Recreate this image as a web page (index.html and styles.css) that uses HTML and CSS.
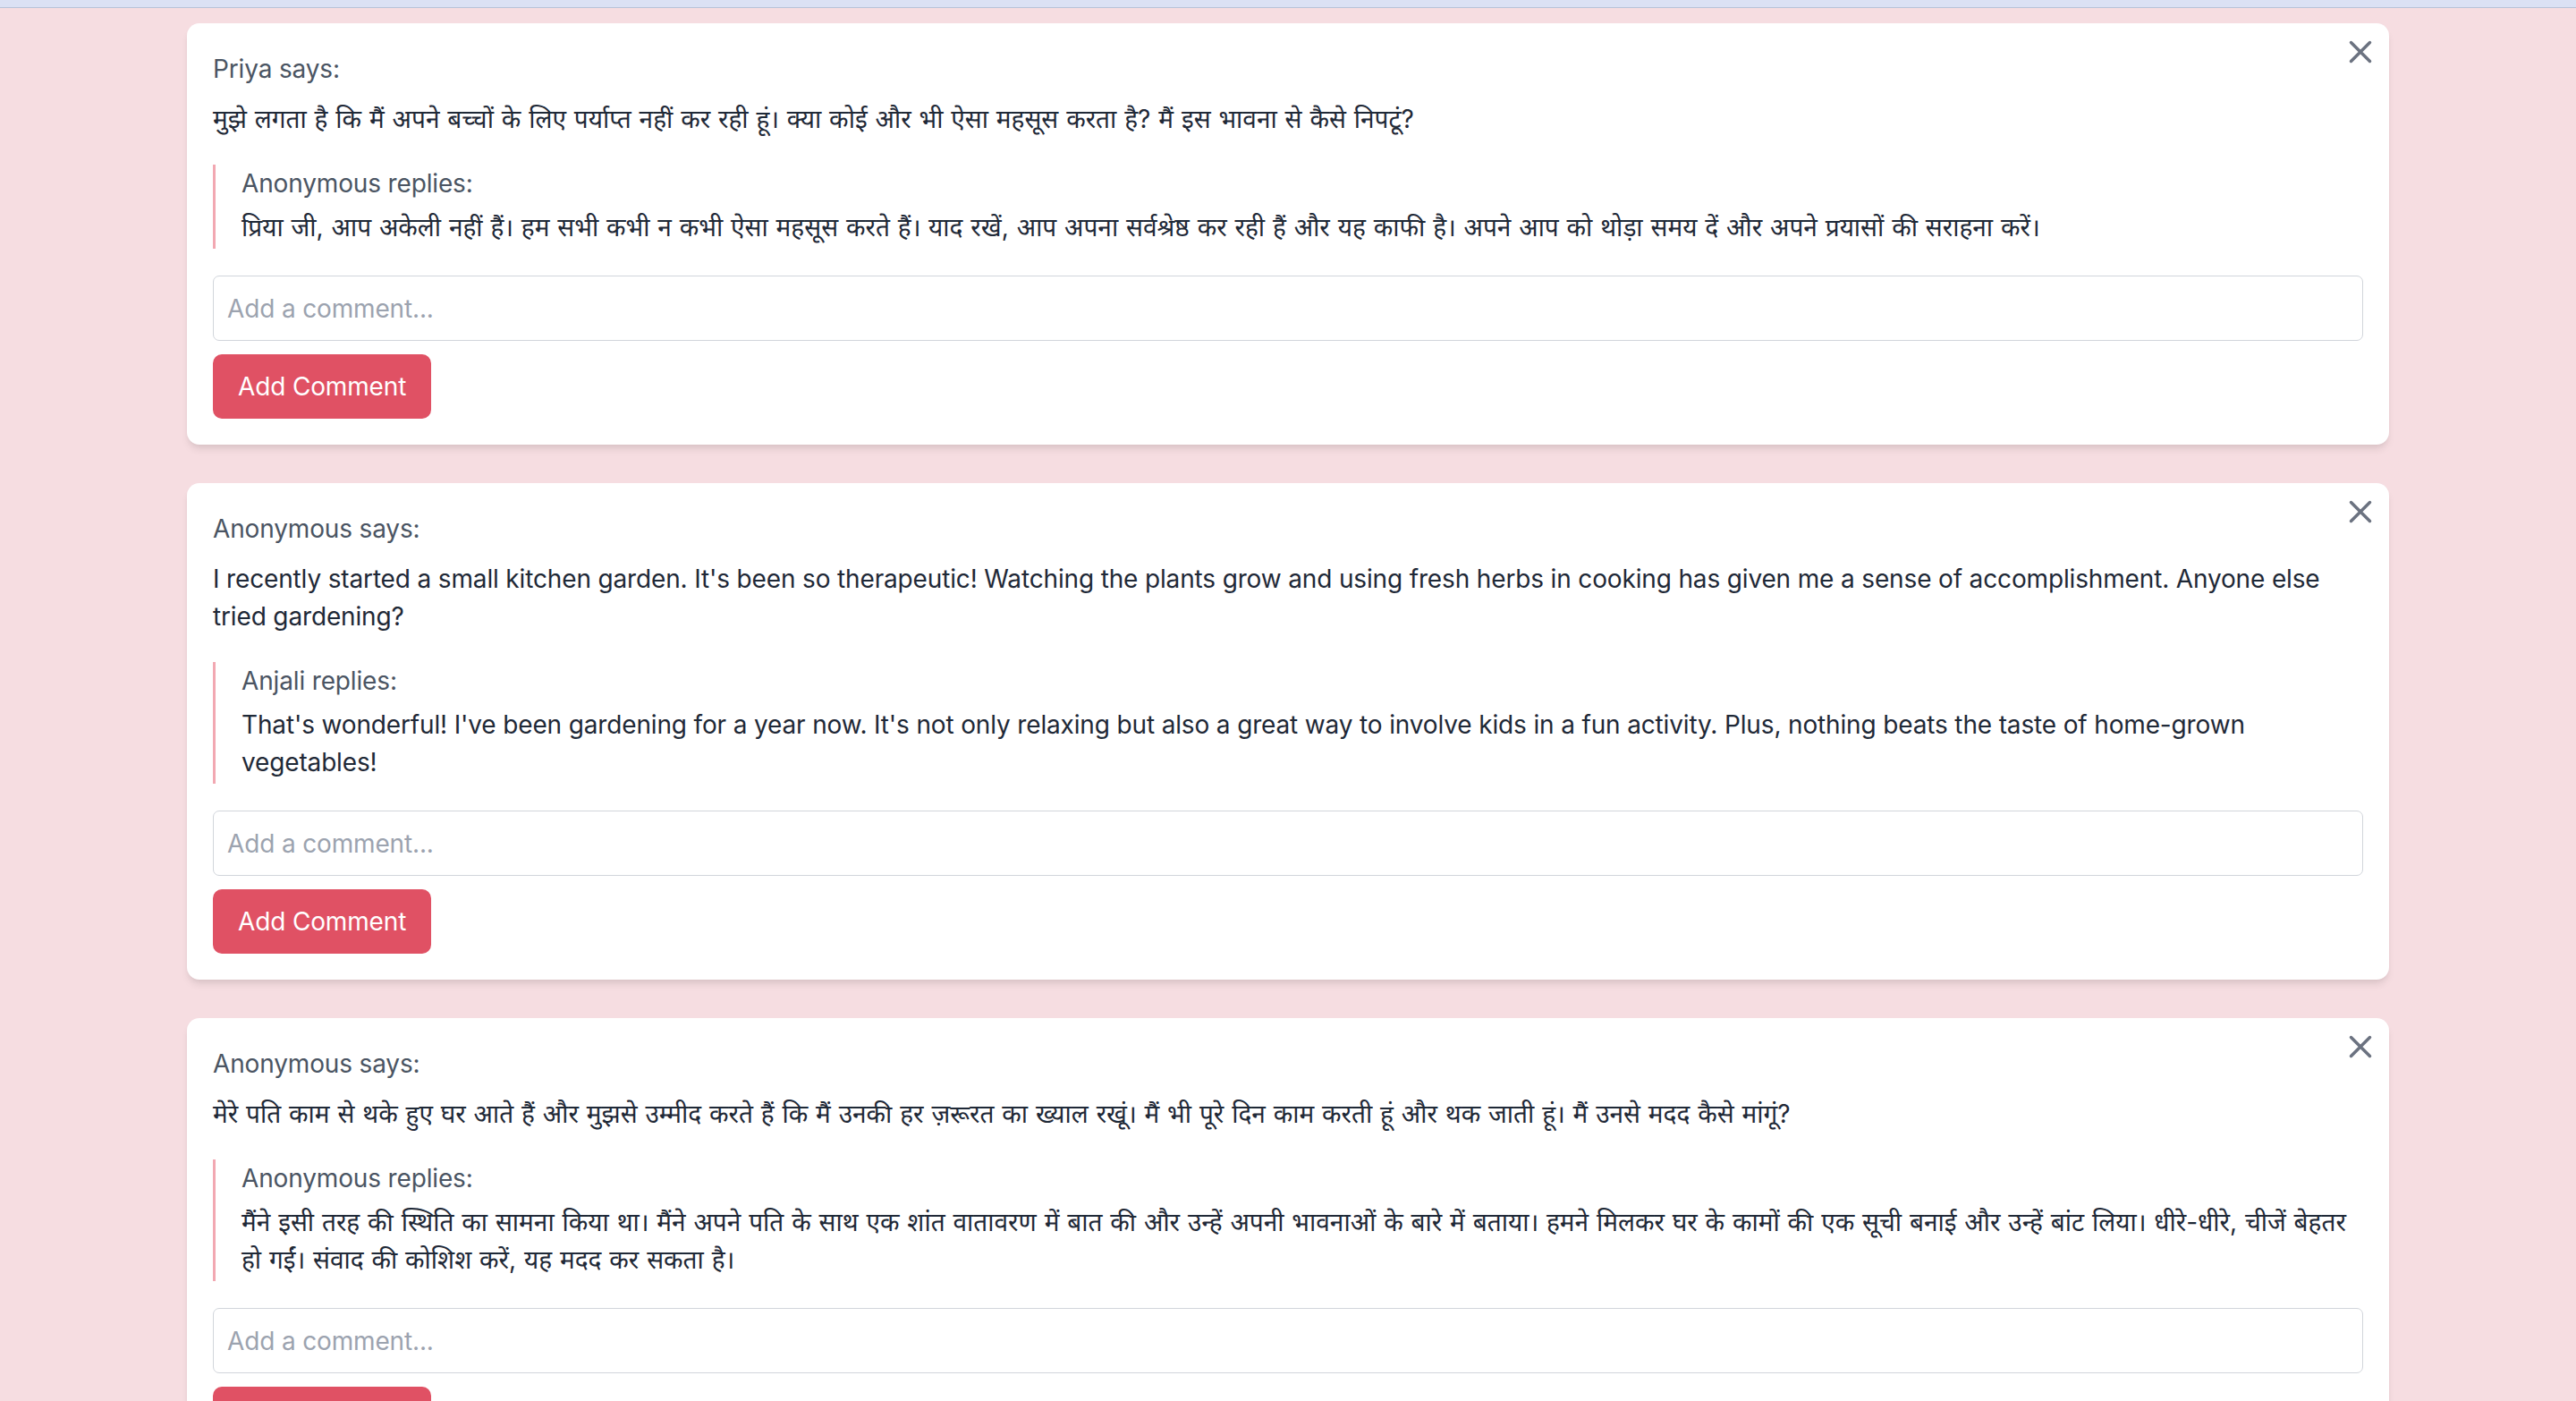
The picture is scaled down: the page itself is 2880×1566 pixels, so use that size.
FILE: index.html
```html
<!DOCTYPE html>
<html lang="hi">
<head>
<meta charset="utf-8">
<title>Community</title>
<link rel="stylesheet" href="styles.css">
</head>
<body>
<div class="topbar"></div>
<main class="feed">
  <article class="post">
    <button class="close" aria-label="Close"><svg viewBox="0 0 24 24" width="42" height="42" fill="none" stroke="currentColor" stroke-width="2" stroke-linecap="round" stroke-linejoin="round"><path d="M6 18L18 6M6 6l12 12"/></svg></button>
    <p class="author">Priya says:</p>
    <p class="body hi">मुझे लगता है कि मैं अपने बच्चों के लिए पर्याप्त नहीं कर रही हूं। क्या कोई और भी ऐसा महसूस करता है? मैं इस भावना से कैसे निपटूं?</p>
    <blockquote class="reply">
      <p class="author reply-author">Anonymous replies:</p>
      <p class="reply-body hi">प्रिया जी, आप अकेली नहीं हैं। हम सभी कभी न कभी ऐसा महसूस करते हैं। याद रखें, आप अपना सर्वश्रेष्ठ कर रही हैं और यह काफी है। अपने आप को थोड़ा समय दें और अपने प्रयासों की सराहना करें।</p>
    </blockquote>
    <input class="comment" type="text" placeholder="Add a comment...">
    <button class="add">Add Comment</button>
  </article>

  <article class="post">
    <button class="close" aria-label="Close"><svg viewBox="0 0 24 24" width="42" height="42" fill="none" stroke="currentColor" stroke-width="2" stroke-linecap="round" stroke-linejoin="round"><path d="M6 18L18 6M6 6l12 12"/></svg></button>
    <p class="author">Anonymous says:</p>
    <p class="body" lang="en">I recently started a small kitchen garden. It's been so therapeutic! Watching the plants grow and using fresh herbs in cooking has given me a sense of accomplishment. Anyone else tried gardening?</p>
    <blockquote class="reply">
      <p class="author reply-author">Anjali replies:</p>
      <p class="reply-body" lang="en">That's wonderful! I've been gardening for a year now. It's not only relaxing but also a great way to involve kids in a fun activity. Plus, nothing beats the taste of home-grown vegetables!</p>
    </blockquote>
    <input class="comment" type="text" placeholder="Add a comment...">
    <button class="add">Add Comment</button>
  </article>

  <article class="post">
    <button class="close" aria-label="Close"><svg viewBox="0 0 24 24" width="42" height="42" fill="none" stroke="currentColor" stroke-width="2" stroke-linecap="round" stroke-linejoin="round"><path d="M6 18L18 6M6 6l12 12"/></svg></button>
    <p class="author">Anonymous says:</p>
    <p class="body hi">मेरे पति काम से थके हुए घर आते हैं और मुझसे उम्मीद करते हैं कि मैं उनकी हर ज़रूरत का ख्याल रखूं। मैं भी पूरे दिन काम करती हूं और थक जाती हूं। मैं उनसे मदद कैसे मांगूं?</p>
    <blockquote class="reply">
      <p class="author reply-author">Anonymous replies:</p>
      <p class="reply-body hi">मैंने इसी तरह की स्थिति का सामना किया था। मैंने अपने पति के साथ एक शांत वातावरण में बात की और उन्हें अपनी भावनाओं के बारे में बताया। हमने मिलकर घर के कामों की एक सूची बनाई और उन्हें बांट लिया। धीरे-धीरे, चीजें बेहतर हो गईं। संवाद की कोशिश करें, यह मदद कर सकता है।</p>
    </blockquote>
    <input class="comment" type="text" placeholder="Add a comment...">
    <button class="add">Add Comment</button>
  </article>
</main>
</body>
</html>
```

FILE: styles.css
```css
* { box-sizing: border-box; }

html, body {
  margin: 0;
  padding: 0;
}

body {
  background: #f6dde1;
  font-family: Inter, "Noto Sans", "Noto Sans Devanagari", sans-serif;
  font-size: 28px;
  line-height: 42px;
  letter-spacing: -0.15px;
  color: #1f2937;
}

.topbar {
  height: 9px;
  background: #dbe1f4;
  border-bottom: 1px solid #b9c2d8;
}

.feed {
  width: 2462px;
  margin: 0 auto;
  padding-top: 17px;
  display: flex;
  flex-direction: column;
  gap: 43px;
}

.post {
  position: relative;
  background: #ffffff;
  border-radius: 14px;
  box-shadow: 0 7px 10px -2px rgba(0, 0, 0, 0.09), 0 3px 7px -3px rgba(0, 0, 0, 0.08);
  padding: 30px 29px 29px 29px;
  display: flex;
  flex-direction: column;
  align-items: flex-start;
}

.close {
  position: absolute;
  top: 11px;
  right: 11px;
  width: 42px;
  height: 42px;
  padding: 0;
  border: 0;
  background: transparent;
  color: #6b7280;
  display: flex;
}

.author {
  margin: 0 0 14px 0;
  color: #4b5563;
}

.body {
  margin: 0 0 30px 0;
  color: #1f2937;
  width: 100%;
}

.hi {
  letter-spacing: 0;
  word-spacing: 1px;
}

.reply {
  margin: 0 0 30px 0;
  padding: 0 0 3px 29px;
  border-left: 3px solid #f2a8b2;
  width: 100%;
}

.reply-author {
  margin-bottom: 7px;
}

.reply-body {
  margin: 0;
  color: #1f2937;
}

.comment {
  width: 100%;
  height: 73px;
  border: 1px solid #d1d5db;
  border-radius: 7px;
  padding: 0 15px;
  font: inherit;
  font-size: 28px;
  letter-spacing: -0.15px;
  color: #1f2937;
  background: #fff;
  outline: none;
}

.comment::placeholder {
  color: #9ca3af;
}

.add {
  margin-top: 15px;
  height: 72px;
  padding: 0 28px;
  border: 0;
  border-radius: 10px;
  background: #e05164;
  color: #ffffff;
  font: inherit;
  font-size: 28px;
  letter-spacing: -0.15px;
}
```
